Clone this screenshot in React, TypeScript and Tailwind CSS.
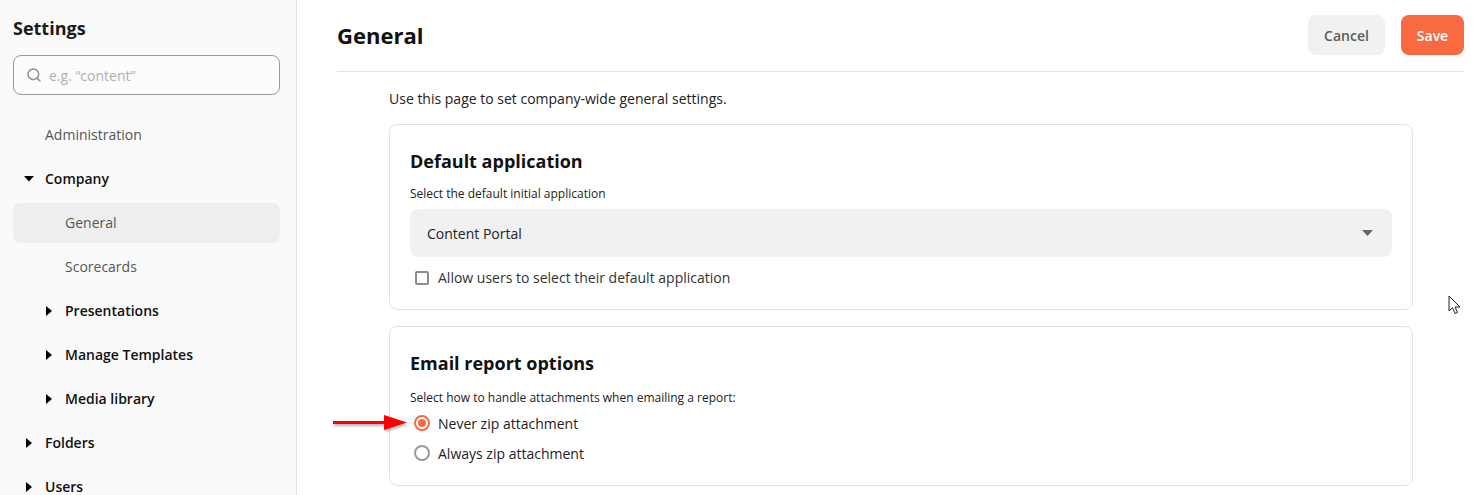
import { Search } from "lucide-react";

function Caret({ open }: { open?: boolean }) {
  return (
    <svg width="12" height="12" viewBox="0 0 12 12" className="shrink-0 text-black">
      {open ? <path d="M1 3h10L6 8.5z" fill="currentColor" /> : <path d="M3 1l6 5-6 5z" fill="currentColor" />}
    </svg>
  );
}

function NavRow({ label, indent, caret, open, bold, active }: { label: string; indent: string; caret?: boolean; open?: boolean; bold?: boolean; active?: boolean }) {
  return (
    <div className={`flex h-10 shrink-0 items-center rounded-lg text-sm ${indent} ${active ? "bg-[#eeeeee]" : ""} ${bold ? "font-semibold text-[#111111]" : "text-[#555555]"}`}>
      <span className="flex w-[22px] shrink-0 items-center">{caret && <Caret open={open} />}</span>
      {label}
    </div>
  );
}

function Sidebar() {
  return (
    <aside className="flex h-full w-[297px] shrink-0 flex-col overflow-hidden border-r border-[#e4e4e4] bg-[#fafafa] pl-[13px] pr-4">
      <h2 className="mt-[15px] shrink-0 text-lg leading-[26px] font-bold text-[#1a1a1a]">Settings</h2>
      <div className="mt-[14px] flex h-10 shrink-0 items-center rounded-lg border border-[#9a9a9a] bg-[#fcfcfc] pl-3">
        <Search size={16} strokeWidth={2.2} className="text-[#8c8c8c]" />
        <span className="mt-[2px] ml-[7px] text-sm text-[#b0b0b0]">e.g. “content”</span>
      </div>
      <div className="mt-5 flex shrink-0 flex-col gap-1">
        <NavRow label="Administration" indent="pl-[10px]" />
        <NavRow label="Company" indent="pl-[10px]" caret open bold />
        <NavRow label="General" indent="pl-[30px]" active />
        <NavRow label="Scorecards" indent="pl-[30px]" />
        <NavRow label="Presentations" indent="pl-[30px]" caret bold />
        <NavRow label="Manage Templates" indent="pl-[30px]" caret bold />
        <NavRow label="Media library" indent="pl-[30px]" caret bold />
        <NavRow label="Folders" indent="pl-[10px]" caret bold />
        <NavRow label="Users" indent="pl-[10px]" caret bold />
      </div>
    </aside>
  );
}

function Card({ title, className, children }: { title: string; className: string; children: React.ReactNode }) {
  return (
    <section className={`rounded-lg border border-[#e2e2e2] bg-white px-5 ${className}`}>
      <h3 className="mt-[23px] text-lg leading-[26px] font-bold text-[#111111]">{title}</h3>
      {children}
    </section>
  );
}

function Radio({ checked, label }: { checked?: boolean; label: string }) {
  return (
    <div className="flex h-[30px] items-center pl-[4px] text-sm text-[#222222]">
      <span className={`flex h-4 w-4 items-center justify-center rounded-full border-2 ${checked ? "border-[#f96a41]" : "border-[#999999]"}`}>
        {checked && <span className="h-2 w-2 rounded-full bg-[#f96a41]" />}
      </span>
      <span className="mt-[2px] ml-2">{label}</span>
    </div>
  );
}

export default function App() {
  return (
    <div className="relative flex h-[495px] w-[1482px] overflow-hidden bg-white font-['Open_Sans',sans-serif]">
      <Sidebar />
      <main className="flex min-w-0 flex-1 flex-col pl-10 pr-[18px]">
        <header className="flex h-[72px] shrink-0 items-center justify-between border-b border-[#e4e4e4] pb-[1px]">
          <h1 className="text-[22px] font-bold text-[#111111]">General</h1>
          <div className="flex gap-4">
            <button className="h-10 w-[77px] rounded-lg bg-[#f1f1f1] pt-[2px] text-sm font-semibold text-[#5c5c5c]">Cancel</button>
            <button className="h-10 w-[63px] rounded-lg bg-[#f96a41] pt-[2px] text-sm font-semibold text-white">Save</button>
          </div>
        </header>
        <div className="flex flex-col pl-[52px] pr-[51px]">
          <p className="mt-[17px] text-sm leading-5 text-[#222222]">Use this page to set company-wide general settings.</p>
          <Card title="Default application" className="mt-[15px] h-[186px]">
            <p className="mt-3 text-xs leading-4 text-[#222222]">Select the default initial application</p>
            <div className="mt-[7px] flex h-12 items-center justify-between rounded-lg bg-[#f1f1f1] pt-[2px] pr-[19px] pl-[17px] text-sm text-[#222222]">
              Content Portal
              <svg width="11" height="6" viewBox="0 0 11 6" className="-mt-[2px]"><path d="M0 0h11L5.5 6z" fill="#666666" /></svg>
            </div>
            <div className="mt-[11px] flex h-5 items-center pl-[5px] text-sm text-[#333333]">
              <span className="h-[14px] w-[14px] rounded-[2px] border-2 border-[#8c8c8c]" />
              <span className="ml-[9px]">Allow users to select their default application</span>
            </div>
          </Card>
          <Card title="Email report options" className="mt-4 h-[160px]">
            <p className="mt-[14px] text-xs leading-4 text-[#222222]">Select how to handle attachments when emailing a report:</p>
            <div className="mt-[2px] flex flex-col">
              <Radio checked label="Never zip attachment" />
              <Radio label="Always zip attachment" />
            </div>
          </Card>
        </div>
      </main>

      {/* red annotation arrow */}
      <svg width="84" height="28" viewBox="0 0 84 28" className="absolute top-[409px] left-[330px] drop-shadow-[1px_2px_1px_rgba(0,0,0,0.3)]">
        <path d="M3 12h51V6l23 7.5L54 21v-6H3z" fill="#ff0000" />
      </svg>

      {/* mouse pointer */}
      <svg width="14" height="20" viewBox="0 0 14 20" className="absolute top-[295px] left-[1448px]">
        <path d="M1 1v15l3.5-3.3L7 18.5l2.5-1-2.4-5.5H12z" fill="#ffffff" stroke="#222222" strokeWidth="1" />
      </svg>
    </div>
  );
}
